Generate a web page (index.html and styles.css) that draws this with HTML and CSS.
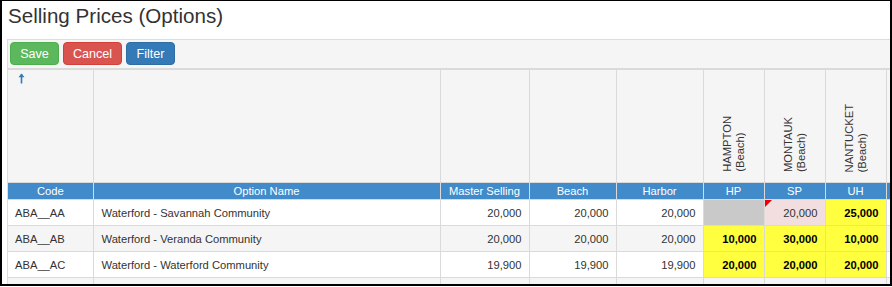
FILE: index.html
```html
<!DOCTYPE html>
<html>
<head>
<meta charset="utf-8">
<link rel="stylesheet" href="styles.css">
</head>
<body>
<div class="frame">
  <h1 class="title">Selling Prices (Options)</h1>
  <div class="panel">
    <div class="toolbar">
      <button class="btn btn-save">Save</button>
      <button class="btn btn-cancel">Cancel</button>
      <button class="btn btn-filter">Filter</button>
    </div>
    <table class="grid">
      <colgroup>
        <col class="c-code"><col class="c-name"><col class="c-master"><col class="c-beach"><col class="c-harbor"><col class="c-sm"><col class="c-sm"><col class="c-sm"><col class="c-sm">
      </colgroup>
      <thead>
        <tr class="top">
          <th><svg class="sort" width="7" height="11" viewBox="0 0 7 11"><path d="M3.5 1 L3.5 10.5" stroke="#337ab7" stroke-width="1.6" fill="none"/><path d="M0.5 4.2 L3.5 0.6 L6.5 4.2 Z" fill="#337ab7"/></svg></th>
          <th></th><th></th><th></th><th></th>
          <th class="rot"><span>HAMPTON<br>(Beach)</span></th>
          <th class="rot"><span>MONTAUK<br>(Beach)</span></th>
          <th class="rot"><span>NANTUCKET<br>(Beach)</span></th>
          <th></th>
        </tr>
        <tr class="band">
          <th>Code</th><th>Option Name</th><th>Master Selling</th><th>Beach</th><th>Harbor</th><th>HP</th><th>SP</th><th>UH</th><th></th>
        </tr>
      </thead>
      <tbody>
        <tr>
          <td>ABA__AA</td><td>Waterford - Savannah Community</td><td class="num">20,000</td><td class="num">20,000</td><td class="num">20,000</td>
          <td class="na"></td><td class="num err"><i class="flag"></i>20,000</td><td class="num hi">25,000</td><td></td>
        </tr>
        <tr class="alt">
          <td>ABA__AB</td><td>Waterford - Veranda Community</td><td class="num">20,000</td><td class="num">20,000</td><td class="num">20,000</td>
          <td class="num hi">10,000</td><td class="num hi">30,000</td><td class="num hi">10,000</td><td></td>
        </tr>
        <tr>
          <td>ABA__AC</td><td>Waterford - Waterford Community</td><td class="num">19,900</td><td class="num">19,900</td><td class="num">19,900</td>
          <td class="num hi">20,000</td><td class="num hi">20,000</td><td class="num hi">20,000</td><td></td>
        </tr>
        <tr class="alt">
          <td>&nbsp;</td><td></td><td></td><td></td><td></td><td></td><td></td><td></td><td></td>
        </tr>
      </tbody>
    </table>
  </div>
</div>
</body>
</html>
```

FILE: styles.css
```css
html, body {
  margin: 0;
  padding: 0;
  background: #fff;
}
body {
  font-family: "Liberation Sans", Arial, sans-serif;
  color: #333;
}
.frame {
  width: 892px;
  height: 286px;
  box-sizing: border-box;
  border-left: 2px solid #000;
  border-top: 1px solid #000;
  border-right: 2px solid #000;
  border-bottom: 2px solid #000;
  overflow: hidden;
  background: #fff;
}
.title {
  margin: 0;
  padding: 2px 0 0 6px;
  height: 35px;
  box-sizing: border-box;
  font-size: 20.6px;
  font-weight: normal;
  line-height: 26px;
  color: #333;
}
.panel {
  margin-left: 5px;
  margin-top: 3px;
  border-top: 1px solid #ddd;
  border-left: 1px solid #ddd;
  background: #f5f5f5;
  width: 1000px;
}
.toolbar {
  display: flex;
  gap: 4px;
  padding: 2px 0 3px 2px;
  height: 28px;
  box-sizing: border-box;
}
.btn {
  font-family: "Liberation Sans", Arial, sans-serif;
  font-size: 12.6px;
  color: #fff;
  height: 23px;
  padding: 0;
  border-radius: 4px;
  border: 1px solid transparent;
  line-height: 20px;
  text-align: center;
  cursor: pointer;
}
.btn-save { background: #5cb85c; border-color: #4cae4c; width: 49px; }
.btn-cancel { background: #d9534f; border-color: #d43f3a; width: 59px; }
.btn-filter { background: #337ab7; border-color: #2e6da4; width: 49px; }

.grid {
  border-collapse: collapse;
  table-layout: fixed;
  width: 939px;
  font-size: 11.2px;
}
.c-code { width: 85px; }
.c-name { width: 347px; }
.c-master { width: 89px; }
.c-beach { width: 87px; }
.c-harbor { width: 87px; }
.c-sm { width: 61px; }

.grid th, .grid td {
  border: 1px solid #dadada;
  padding: 0 7px;
  white-space: nowrap;
  overflow: hidden;
}
.grid th:first-child, .grid td:first-child { border-left: 0; }
.top th {
  height: 112px;
  vertical-align: bottom;
  background: #f5f5f5;
  border-top: 2px solid #dadada;
  padding: 0;
  font-weight: normal;
}
.top th:first-child {
  vertical-align: top;
  text-align: left;
}
.sort {
  display: block;
  margin: 3px 0 0 10px;
}
.rot span {
  display: inline-block;
  writing-mode: vertical-rl;
  transform: rotate(180deg);
  font-size: 11.2px;
  line-height: 13px;
  text-align: left;
  color: #333;
  margin-bottom: 8px;
}
.band th {
  background: #428bca;
  color: #fff;
  font-weight: normal;
  height: 16px;
  line-height: 15px;
  text-align: center;
  padding: 0 2px;
}
.grid td {
  height: 25px;
  background: #fff;
  color: #333;
}
.grid tr.alt td { background: #f5f5f5; }
.grid td:first-child { padding-left: 7px; }
.grid td:nth-child(2) { padding-left: 8px; }
.num { text-align: right; }
.grid td.hi {
  background: #ffff40;
  font-weight: bold;
  color: #000;
}
.grid tr.alt td.hi { background: #ffff40; }
.grid td.na { background: #c9c9c9; }
.grid td.err {
  background: #f2dede;
  position: relative;
}
.flag {
  position: absolute;
  left: 0;
  top: 0;
  width: 0;
  height: 0;
  border-top: 7px solid #e00;
  border-right: 7px solid transparent;
}
```
